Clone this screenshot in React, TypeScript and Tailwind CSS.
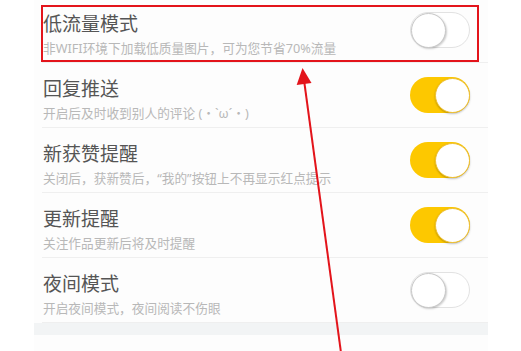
import React from 'react';

interface SettingRow {
  title: string;
  desc: string;
  on: boolean;
}

const rows: SettingRow[] = [
  { title: '低流量模式', desc: '非WIFI环境下加载低质量图片，可为您节省70%流量', on: false },
  { title: '回复推送', desc: '开启后及时收到别人的评论 (・`ω´・)', on: true },
  { title: '新获赞提醒', desc: '关闭后，获新赞后，“我的”按钮上不再显示红点提示', on: true },
  { title: '更新提醒', desc: '关注作品更新后将及时提醒', on: true },
  { title: '夜间模式', desc: '开启夜间模式，夜间阅读不伤眼', on: false },
];

function Toggle({ on }: { on: boolean }) {
  if (on) {
    return (
      <div className="flex h-[36px] w-[60px] shrink-0 items-center justify-end rounded-full bg-[#fdc800]">
        <div className="h-[35px] w-[35px] rounded-full border border-[#f0c030] bg-white shadow-[0_1px_2px_rgba(0,0,0,0.25)]" />
      </div>
    );
  }
  return (
    <div className="flex h-[36px] w-[60px] shrink-0 items-center justify-start rounded-full border border-[#e2e2e2] bg-white">
      <div className="h-[35px] w-[35px] rounded-full border border-[#c8c8c8] bg-white shadow-[1px_1px_2px_rgba(0,0,0,0.2)]" />
    </div>
  );
}

export default function App() {
  return (
    <div
      className="relative h-[351px] w-[521px] overflow-hidden bg-white"
      style={{ fontFamily: '"Noto Sans", "Noto Sans CJK SC", sans-serif' }}
    >
      <div className="ml-[34px] mt-[-2px] w-[454px] bg-[#fdfdfd]">
        {rows.map((row) => (
          <div
            key={row.title}
            className="ml-[8px] flex h-[65px] items-center justify-between border-b border-[#efefef] pl-[1px] pr-[18px]"
          >
            <div className="flex flex-col pt-[7px]">
              <span className="text-[19px] leading-[24px] text-[#555555]">{row.title}</span>
              <span className="mt-[4px] text-[12.7px] leading-[16px] text-[#b8b8b8]">{row.desc}</span>
            </div>
            <Toggle on={row.on} />
          </div>
        ))}
        <div className="h-[12px] bg-[#f2f4f5]" />
        <div className="h-[40px]" />
      </div>

      {/* annotation box */}
      <div className="absolute left-[41px] top-[5px] h-[57px] w-[438px] border-2 border-[#e3141b]" />

      {/* annotation arrow */}
      <svg className="absolute left-0 top-0" width="521" height="351" viewBox="0 0 521 351">
        <line x1="342" y1="360" x2="304" y2="80" stroke="#e3141b" strokeWidth="2" />
        <polygon points="302.5,68 311.5,83 296.7,85" fill="#e3141b" />
      </svg>
    </div>
  );
}
